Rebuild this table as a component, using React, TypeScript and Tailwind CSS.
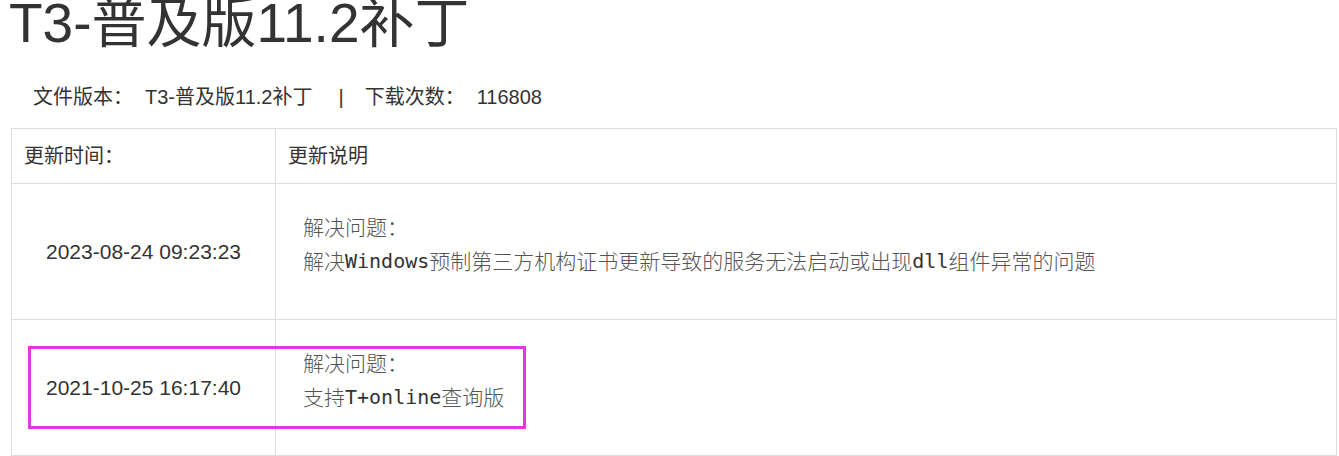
import React from 'react';

const rows = [
  {
    time: '2023-08-24 09:23:23',
    lines: [
      [{ t: '解决问题：' }],
      [{ t: '解决' }, { t: 'Windows', mono: true }, { t: '预制第三方机构证书更新导致的服务无法启动或出现' }, { t: 'dll', mono: true }, { t: '组件异常的问题' }],
    ],
  },
  {
    time: '2021-10-25 16:17:40',
    lines: [
      [{ t: '解决问题：' }],
      [{ t: '支持' }, { t: 'T+online', mono: true }, { t: '查询版' }],
    ],
  },
];

const sans = "font-['Liberation_Sans','Noto_Sans_CJK_SC',sans-serif]";

const App: React.FC = () => {
  return (
    <div className={`relative w-[1339px] h-[456px] overflow-hidden bg-white text-[#333] ${sans}`}>
      <h1 className="ml-[9px] -mt-[9px] text-[55px] leading-[64px] font-normal whitespace-nowrap">T3-普及版11.2补丁</h1>

      <div className="mt-[25px] ml-[33px] h-[34px] flex items-center text-[20px] text-[#333] whitespace-nowrap">
        <span>文件版本：</span>
        <span className="ml-[12px]">T3-普及版11.2补丁</span>
        <span className="ml-[26px] mr-[21px]">|</span>
        <span>下载次数：</span>
        <span className="ml-[12px]">116808</span>
      </div>

      <div className="mt-[14px] ml-[11px] w-[1326px] border border-[#ddd]">
        <div className="flex h-[54px] text-[20px]">
          <div className="w-[264px] pl-[12px] flex items-center border-r border-[#ddd]">更新时间：</div>
          <div className="flex-1 pl-[12px] flex items-center">更新说明</div>
        </div>
        {rows.map(r => (
          <div key={r.time} className="flex h-[136px] border-t border-[#ddd]">
            <div className="w-[264px] flex items-center justify-center text-[21px] border-r border-[#ddd]">{r.time}</div>
            <div className="flex-1 pl-[27px] pb-[16px] flex flex-col justify-center">
              {r.lines.map((ln, i) => (
                <div key={i} className="h-[34px] flex items-center whitespace-nowrap text-[21px] text-[#555] font-['Noto_Sans_CJK_SC',sans-serif] font-light">
                  {ln.map((p, j) =>
                    p.mono ? (
                      <span key={j} className="font-['DejaVu_Sans_Mono',monospace] text-[20px] text-[#333] font-normal">{p.t}</span>
                    ) : (
                      <span key={j}>{p.t}</span>
                    )
                  )}
                </div>
              ))}
            </div>
          </div>
        ))}
      </div>

      {/* annotation box */}
      <div className="absolute left-[28px] top-[346px] w-[498px] h-[83px] border-[3px] border-[#e237e2] pointer-events-none" />
    </div>
  );
};

export default App;
